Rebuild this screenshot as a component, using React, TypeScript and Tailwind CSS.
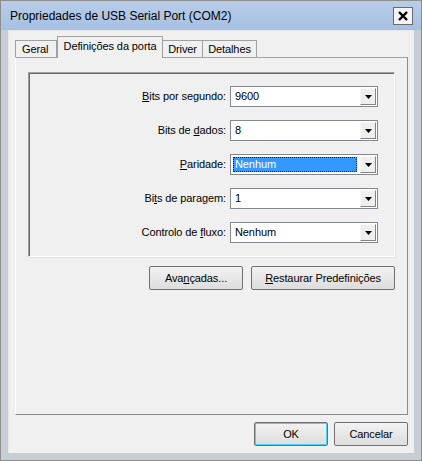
import React from 'react';

const font = { fontFamily: '"Liberation Sans", Arial, sans-serif' };

function Combo({ value, selected }: { value: string; selected?: boolean }) {
  return (
    <div className="flex h-[21px] w-[148px] items-stretch border border-[#828790] bg-white">
      <div className="flex flex-1 items-center px-[2px]">
        {selected ? (
          <div className="flex h-[15px] flex-1 items-center border border-dotted border-[#1c1c1c] bg-[#3399ff] pl-[1px] text-white">
            {value}
          </div>
        ) : (
          <span className="pl-[2px] text-black">{value}</span>
        )}
      </div>
      <div className="m-[1px] flex w-[16px] items-center justify-center border border-t-[#f8f8f8] border-l-[#f8f8f8] border-r-[#838383] border-b-[#838383] bg-[#efefef]">
        <svg width="7" height="4" viewBox="0 0 7 4">
          <path d="M0 0h7L3.5 4z" fill="#000" />
        </svg>
      </div>
    </div>
  );
}

function Row({ label, value, selected }: { label: React.ReactNode; value: string; selected?: boolean }) {
  return (
    <div className="flex items-center gap-[4px]">
      <div className="w-[197px] text-right text-black">{label}</div>
      <Combo value={value} selected={selected} />
    </div>
  );
}

function Button({ children, className }: { children: React.ReactNode; className?: string }) {
  return (
    <div
      className={`flex h-[24px] items-center justify-center rounded-[2px] border border-[#707070] bg-gradient-to-b from-[#f2f2f2] to-[#dddddd] text-black ${className ?? ''}`}
    >
      {children}
    </div>
  );
}

export default function App() {
  return (
    <div className="h-[461px] w-[422px] overflow-hidden bg-[#f0f0f0] text-[11px] tracking-[-0.1px]" style={font}>
      <div className="flex h-full w-full flex-col border border-[#8e8e8e] bg-[#c8cdd4] px-[7px] pb-[7px]">
        {/* title bar */}
        <div className="-mx-[7px] flex h-[29px] items-center justify-between bg-gradient-to-b from-[#b8cde8] to-[#a6c0e2] pl-[9px] pr-[8px]">
          <span className="text-[12px] tracking-normal text-black">
            Propriedades de USB Serial Port (COM2)
          </span>
          <div className="flex h-[18px] w-[20px] items-center justify-center border border-[#6a6a6a] bg-[#f4f4f4]">
            <svg width="10" height="10" viewBox="0 0 10 10">
              <path d="M1 1L9 9M9 1L1 9" stroke="#000" strokeWidth="2.4" />
            </svg>
          </div>
        </div>

        {/* client area */}
        <div className="flex flex-1 flex-col border-l border-t border-[#e8e8e8] bg-[#f0f0f0] px-[6px] pt-[6px]">
          {/* tabs */}
          <div className="flex h-[20px] items-end">
            <div className="flex h-[17px] w-[42px] items-center border border-b-0 border-[#a0a0a0] bg-[#f0f0f0] pl-[6px]">Geral</div>
            <div className="relative z-10 -mb-[1px] flex h-[22px] w-[106px] items-center justify-center border border-b-0 border-[#a0a0a0] bg-[#f0f0f0] pb-[2px]">
              Definições da porta
            </div>
            <div className="flex h-[17px] w-[40px] items-center justify-center border border-b-0 border-l-0 border-[#a0a0a0] bg-[#f0f0f0]">Driver</div>
            <div className="flex h-[17px] w-[54px] items-center justify-center border border-b-0 border-l-0 border-[#a0a0a0] bg-[#f0f0f0]">Detalhes</div>
          </div>

          {/* tab page */}
          <div className="flex h-[358px] flex-col border border-t-[#a0a0a0] border-l-[#ffffff] border-r-[#8a8a8a] border-b-[#8a8a8a] px-[12px] pt-[14px]">
            <div className="flex flex-col gap-[13px] border border-t-[#a0a0a0] border-l-[#a0a0a0] border-r-[#ffffff] border-b-[#ffffff] pb-[13px] pt-[13px] shadow-[inset_1px_1px_0_#696969,1px_1px_0_#e3e3e3]">
              <Row label={<><u>B</u>its por segundo:</>} value="9600" />
              <Row label={<>Bits de <u>d</u>ados:</>} value="8" />
              <Row label={<><u>P</u>aridade:</>} value="Nenhum" selected />
              <Row label={<>Bi<u>t</u>s de paragem:</>} value="1" />
              <Row label={<>Controlo de <u>f</u>luxo:</>} value="Nenhum" />
            </div>
            <div className="mt-[9px] flex justify-end gap-[8px] pr-[0px]">
              <Button className="w-[94px]">
                Ava<u>n</u>çadas...
              </Button>
              <Button className="w-[144px]">
                <u>R</u>estaurar Predefinições
              </Button>
            </div>
          </div>

          {/* bottom buttons */}
          <div className="mt-[7px] flex justify-end gap-[6px]">
            <Button className="w-[74px] border-[#3c7fb1] shadow-[inset_0_0_0_1px_#48d2f8]">OK</Button>
            <Button className="w-[74px]">Cancelar</Button>
          </div>
        </div>
      </div>
    </div>
  );
}
